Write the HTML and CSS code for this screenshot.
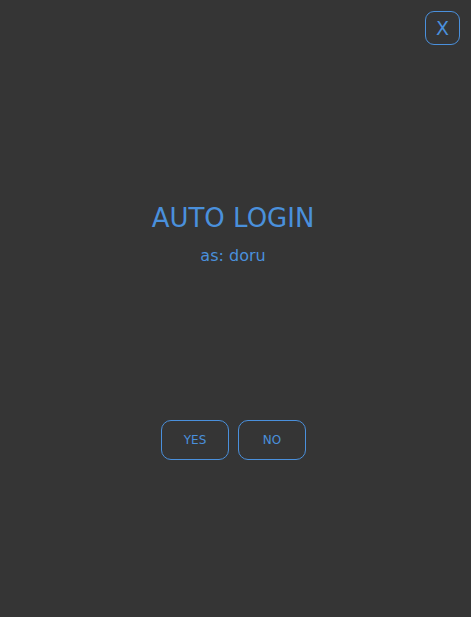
FILE: index.html
```html
<!DOCTYPE html>
<html>
<head>
<meta charset="utf-8">
<link rel="stylesheet" href="styles.css">
</head>
<body>
<div class="dialog">
  <div class="topbar">
    <button class="close">X</button>
  </div>
  <div class="content">
    <h1 class="title">AUTO LOGIN</h1>
    <p class="user">as: doru</p>
  </div>
  <div class="actions">
    <button class="btn">YES</button>
    <button class="btn">NO</button>
  </div>
</div>
</body>
</html>
```
FILE: styles.css
```css
html, body {
  margin: 0;
  padding: 0;
  background: #353535;
}
.dialog {
  width: 471px;
  height: 617px;
  display: flex;
  flex-direction: column;
  font-family: "DejaVu Sans", Verdana, sans-serif;
  color: #4a90dc;
}
.topbar {
  display: flex;
  justify-content: flex-end;
  padding: 11px 11px 0 0;
}
.close {
  width: 35px;
  height: 34px;
  box-sizing: border-box;
  border: 1px solid #4a90dc;
  border-radius: 9px;
  background: transparent;
  color: #4a90dc;
  font-family: "DejaVu Sans", Verdana, sans-serif;
  font-size: 19px;
  padding: 0;
  line-height: 1;
}
.content {
  display: flex;
  flex-direction: column;
  align-items: center;
  margin-top: 158px;
  padding-right: 5px;
}
.title {
  margin: 0;
  font-weight: normal;
  font-size: 26px;
  line-height: 30px;
}
.user {
  margin: 13px 0 0 0;
  font-size: 16px;
  line-height: 20px;
}
.actions {
  display: flex;
  justify-content: center;
  gap: 9px;
  margin-top: 154px;
  padding-right: 4px;
}
.btn {
  width: 68px;
  height: 40px;
  box-sizing: border-box;
  border: 1px solid #4a90dc;
  border-radius: 10px;
  background: transparent;
  color: #4a90dc;
  font-family: "DejaVu Sans", Verdana, sans-serif;
  font-size: 12px;
  padding: 0;
}
```
